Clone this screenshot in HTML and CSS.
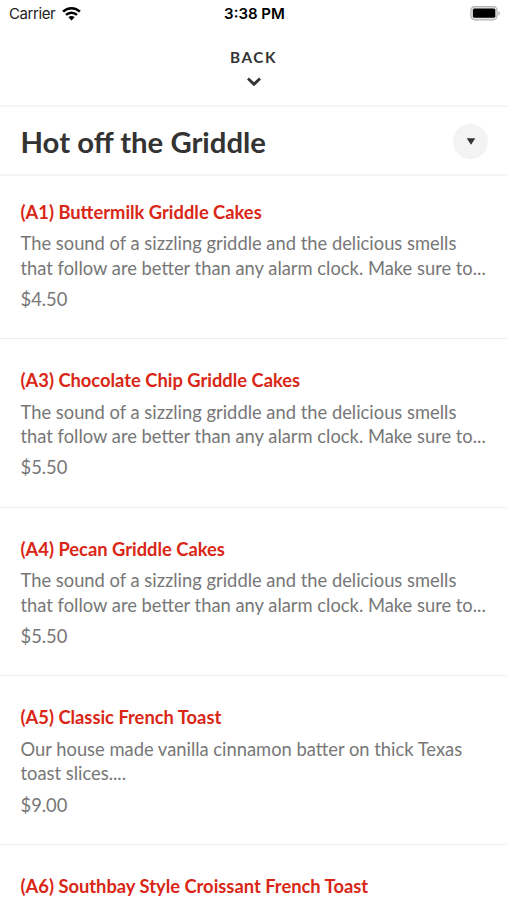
FILE: index.html
```html
<!DOCTYPE html>
<html lang="en">

<head>
    <meta charset="UTF-8">
    <title>Hot off the Griddle</title>
    <link rel="stylesheet" href="styles.css">
</head>

<body>
    <div class="status-bar">
        <div class="carrier">
            <span>Carrier</span>
            <svg class="wifi" width="19" height="14" viewBox="0 0 19 14">
                <path d="M1.1 4.7a12 12 0 0 1 16.8 0M4 7.9a7.8 7.8 0 0 1 11 0" fill="none" stroke="#000" stroke-width="2.5"/>
                <path d="M9.5 13.4L6.4 10.3a4.4 4.4 0 0 1 6.2 0z"/>
            </svg>
        </div>
        <div class="time">3:38 PM</div>
        <svg class="battery" width="31" height="15" viewBox="0 0 31 15">
            <rect x=".9" y=".6" width="26.2" height="13.2" rx="3.8" fill="#e4e4e4" stroke="#b4b4b4" stroke-width="1.2"/>
            <rect x="2.9" y="2.6" width="22.4" height="9.2" rx="1.6"/>
            <path d="M28.5 4.9c1.9.8 1.9 3.8 0 4.6z" fill="#aaa"/>
        </svg>
    </div>

    <header class="back">
        <span>BACK</span>
        <svg width="14" height="10" viewBox="0 0 14 10">
            <path d="M1 1.5l6 5.7 6-5.7" fill="none" stroke="#333" stroke-width="2.8"/>
        </svg>
    </header>

    <div class="category">
        <h1>Hot off the Griddle</h1>
        <button class="dropdown" type="button" aria-label="Categories">
            <svg width="10" height="7" viewBox="0 0 10 7"><path d="M.7.3h8.6L5 6.7z" fill="#333"/></svg>
        </button>
    </div>

    <main class="menu">
        <section class="item">
            <h2>(A1) Buttermilk Griddle Cakes</h2>
            <p>The sound of a sizzling griddle and the delicious smells<br>that follow are better than any alarm clock. Make sure to...</p>
            <div class="price">$4.50</div>
        </section>
        <section class="item">
            <h2>(A3) Chocolate Chip Griddle Cakes</h2>
            <p>The sound of a sizzling griddle and the delicious smells<br>that follow are better than any alarm clock. Make sure to...</p>
            <div class="price">$5.50</div>
        </section>
        <section class="item">
            <h2>(A4) Pecan Griddle Cakes</h2>
            <p>The sound of a sizzling griddle and the delicious smells<br>that follow are better than any alarm clock. Make sure to...</p>
            <div class="price">$5.50</div>
        </section>
        <section class="item">
            <h2>(A5) Classic French Toast</h2>
            <p>Our house made vanilla cinnamon batter on thick Texas<br>toast slices....</p>
            <div class="price">$9.00</div>
        </section>
        <section class="item last">
            <h2>(A6) Southbay Style Croissant French Toast</h2>
        </section>
    </main>
</body>

</html>
```

FILE: styles.css
```css
* {
    box-sizing: border-box;
}

body {
    margin: 0;
    background-color: #fff;
    color: #333;
    font-family: Lato, sans-serif;
}

.status-bar {
    display: grid;
    grid-template-columns: 1fr auto 1fr;
    align-items: center;
    height: 27px;
    padding: 0 6px 0 9px;
    color: #000;
    font: 15px Inter, sans-serif;
}

.carrier {
    display: flex;
    align-items: center;
    gap: 6.5px;
    color: #222;
    letter-spacing: -0.4px;
}

.time {
    margin-right: 1px;
    font-weight: 600;
}

.battery {
    justify-self: end;
}

.back {
    display: flex;
    flex-direction: column;
    align-items: center;
    gap: 10px;
    height: 80px;
    padding-top: 20px;
    border-bottom: 2px solid #f5f5f5;
    font-size: 15.3px;
    font-weight: bold;
    line-height: 20px;
    letter-spacing: 1.6px;
}

.category {
    display: flex;
    align-items: center;
    justify-content: space-between;
    height: 69px;
    padding: 2px 19px 0 20.5px;
    border-bottom: 2px solid #f5f5f5;
}

h1 {
    margin: 0;
    font-size: 29.3px;
}

.dropdown {
    display: flex;
    align-items: center;
    justify-content: center;
    width: 35px;
    height: 35px;
    padding: 0;
    border: none;
    border-radius: 50%;
    background-color: #f3f3f3;
}

.item {
    height: 168.6px;
    padding: 29px 0 0 20.5px;
    border-bottom: 1px solid #ededed;
    font-size: 18.35px;
    white-space: nowrap;
}

.item:first-child {
    height: 163px;
    padding-top: 23.7px;
}

.item.last {
    height: 55px;
    border-bottom: none;
}

h2 {
    margin: 0 0 7.8px;
    color: #d92616;
    font-size: 18.33px;
    line-height: 24px;
}

.item p {
    margin: 0 0 6.7px;
    color: #777;
    line-height: 24.5px;
}

.price {
    color: #777;
    line-height: 24px;
}
```
